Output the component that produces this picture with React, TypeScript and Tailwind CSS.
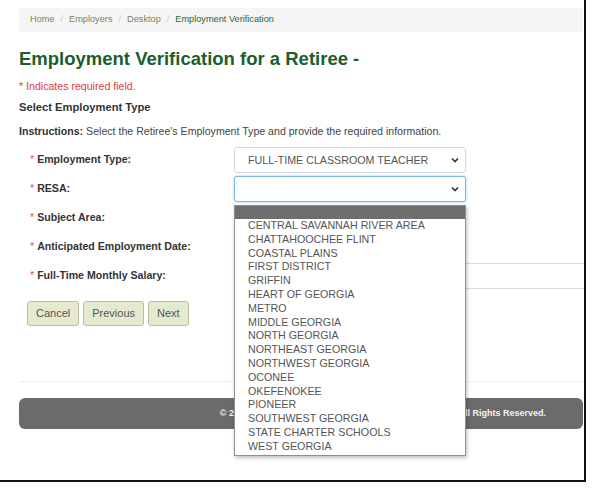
const RESAS = [
  "CENTRAL SAVANNAH RIVER AREA",
  "CHATTAHOOCHEE FLINT",
  "COASTAL PLAINS",
  "FIRST DISTRICT",
  "GRIFFIN",
  "HEART OF GEORGIA",
  "METRO",
  "MIDDLE GEORGIA",
  "NORTH GEORGIA",
  "NORTHEAST GEORGIA",
  "NORTHWEST GEORGIA",
  "OCONEE",
  "OKEFENOKEE",
  "PIONEER",
  "SOUTHWEST GEORGIA",
  "STATE CHARTER SCHOOLS",
  "WEST GEORGIA",
];

function Chevron() {
  return (
    <svg width="8" height="6" viewBox="0 0 8 6" className="shrink-0">
      <polyline points="1,1.5 4,4.5 7,1.5" fill="none" stroke="#333" strokeWidth="1.6" />
    </svg>
  );
}

function Select({ value, focused }: { value?: string; focused?: boolean }) {
  return (
    <div
      className={`flex h-[26px] w-[232px] shrink-0 items-center justify-between rounded-[3px] border bg-white pl-[13px] pr-[6px] text-[10.7px] text-[#555] ${
        focused ? "border-[#7fb6e6] shadow-[0_0_3px_rgba(102,175,233,0.6)]" : "border-[#d6d6d6]"
      }`}
    >
      <span>{value}</span>
      <Chevron />
    </div>
  );
}

function Label({ text }: { text: string }) {
  return (
    <div className="w-[215px] shrink-0 pl-[11px] text-[10.6px] font-bold text-[#333]">
      <span className="mr-[3px] font-normal text-[#d9534f]">*</span>
      {text}
    </div>
  );
}

function Btn({ children }: { children: string }) {
  return (
    <button className="h-[25px] rounded-[3px] border border-[#b9bf9c] bg-[#e4e9cf] px-[8px] text-[11px] text-[#555]">
      {children}
    </button>
  );
}

export default function App() {
  return (
    <div className="relative h-[493px] w-[592px] bg-white font-['Liberation_Sans',Arial,sans-serif]">
      <div className="relative h-[482px] w-[586px] overflow-hidden border-r-2 border-b-2 border-[#111] pl-[19px] pr-[1px] pt-[8px]">
        <div className="flex h-[24px] items-center gap-[6px] rounded-[2px] bg-[#f5f5f5] pl-[11px] text-[9.2px]">
          <span className="text-[#8a7d55]">Home</span>
          <span className="text-[#ccc]">/</span>
          <span className="text-[#8a7d55]">Employers</span>
          <span className="text-[#ccc]">/</span>
          <span className="text-[#8a7d55]">Desktop</span>
          <span className="text-[#ccc]">/</span>
          <span className="text-[#2b6a2f]">Employment Verification</span>
        </div>

        <h1 className="mt-[16px] text-[18.5px] font-bold leading-[22px] text-[#1b5e2b]">
          Employment Verification for a Retiree -
        </h1>
        <p className="mt-[9px] text-[10.6px] leading-[14px] text-[#e0393e]">* Indicates required field.</p>
        <p className="mt-[7px] text-[11.2px] font-bold leading-[14px] text-[#333]">Select Employment Type</p>
        <p className="mt-[10px] text-[10.6px] leading-[14px] text-[#444]">
          <span className="font-bold text-[#333]">Instructions:</span> Select the Retiree's Employment Type and
          provide the required information.
        </p>

        <div className="mt-[9px] flex flex-col gap-[3px]">
          <div className="flex h-[26px] items-center">
            <Label text="Employment Type:" />
            <Select value="FULL-TIME CLASSROOM TEACHER" />
          </div>
          <div className="flex h-[26px] items-center">
            <Label text="RESA:" />
            <Select focused />
          </div>
          <div className="flex h-[26px] items-center">
            <Label text="Subject Area:" />
            <Select />
          </div>
          <div className="flex h-[26px] items-center">
            <Label text="Anticipated Employment Date:" />
            <div className="h-[26px] w-[180px] shrink-0 rounded-[3px] border border-[#d6d6d6]" />
          </div>
          <div className="flex h-[26px] items-center">
            <Label text="Full-Time Monthly Salary:" />
            <div className="h-[26px] w-[360px] shrink-0 rounded-[3px] border border-[#dcdcdc]" />
          </div>
        </div>

        <div className="mt-[12px] flex gap-[4px] pl-[8px]">
          <Btn>Cancel</Btn>
          <Btn>Previous</Btn>
          <Btn>Next</Btn>
        </div>

        <hr className="mt-[55px] border-t border-[#eee]" />

        <div className="mt-[16px] flex h-[31px] items-center justify-end rounded-[6px] bg-[#6b6b6b] pr-[37px] text-[9px] font-bold text-[#f2f2f2]">
          © 2024 - Teachers Retirement System of Georgia (TRS). All Rights Reserved.
        </div>

        <div className="absolute left-[234px] top-[205px] w-[232px] border border-[#8f8f8f] bg-white pb-[1px] shadow-[1px_2px_4px_rgba(0,0,0,0.25)]">
          <div className="h-[13px] bg-[#6e6e6e]" />
          {RESAS.map((r) => (
            <div key={r} className="pl-[13px] text-[10.7px] leading-[13.8px] text-[#555]">
              {r}
            </div>
          ))}
        </div>
      </div>
    </div>
  );
}
